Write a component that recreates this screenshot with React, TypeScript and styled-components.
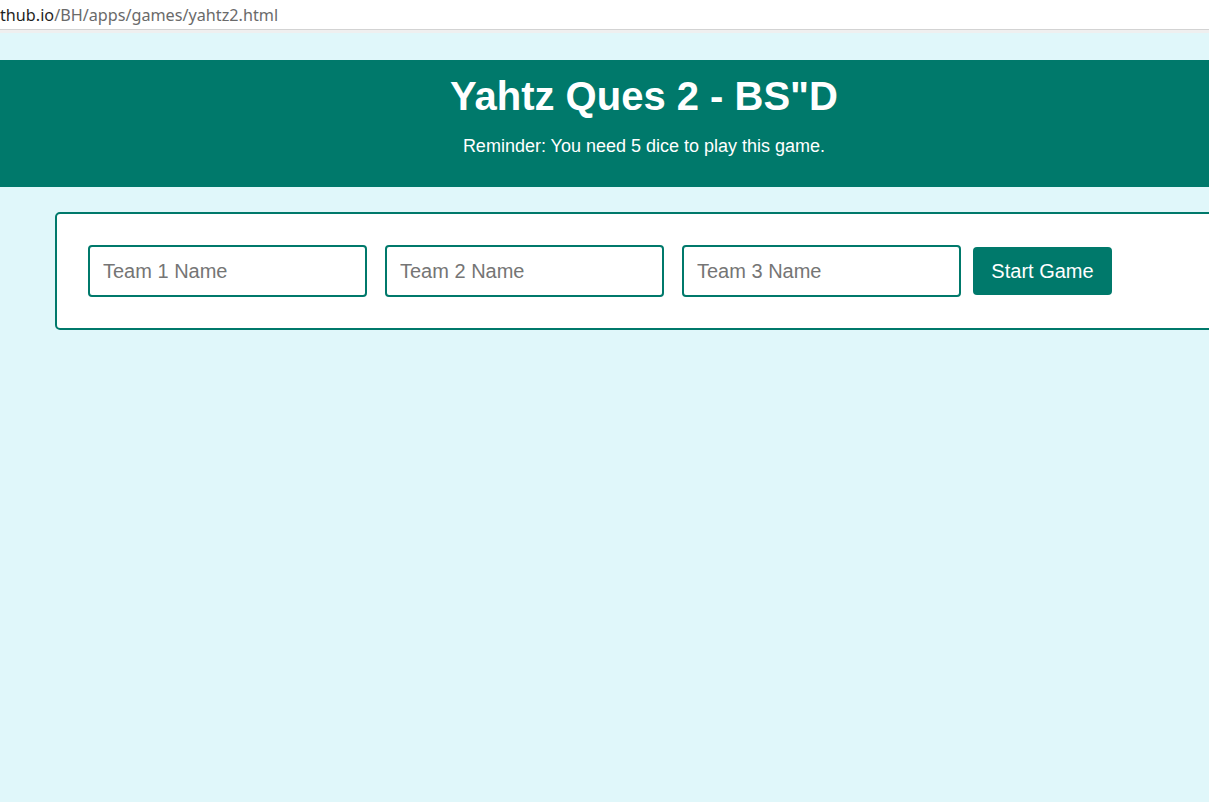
import React from 'react';
import styled, { createGlobalStyle } from 'styled-components';

const GlobalStyle = createGlobalStyle`
  body {
    margin: 0;
    background: #e0f7fa;
    font-family: "Liberation Sans", Arial, sans-serif;
    overflow: hidden;
  }
`;

const AddressBar = styled.div`
  height: 29px;
  background: #ffffff;
  border-bottom: 1px solid #d3d3d3;
  display: flex;
  align-items: center;
  font-family: "Noto Sans", "Open Sans", sans-serif;
  font-size: 16.2px;
  color: #6a6a6a;
  white-space: nowrap;
  overflow: hidden;
`;

const Host = styled.span`
  color: #1f1f1f;
`;

const Strip = styled.div`
  height: 3px;
  background: #efefef;
`;

const Page = styled.div`
  width: 1288px;
  padding-top: 27px;
`;

const Header = styled.header`
  background: #00796b;
  color: #ffffff;
  height: 127px;
  box-sizing: border-box;
  padding-top: 13px;
  text-align: center;
`;

const Title = styled.h1`
  margin: 0;
  font-size: 40px;
  line-height: 46px;
  font-weight: bold;
`;

const Reminder = styled.p`
  margin: 17px 0 0;
  font-size: 18px;
  line-height: 20px;
`;

const Card = styled.div`
  margin: 25px 55px 0;
  background: #ffffff;
  border: 2px solid #00796b;
  border-radius: 5px;
  padding: 31px;
  display: flex;
  align-items: center;
`;

const Fields = styled.div`
  display: flex;
  gap: 18px;
`;

const TeamInput = styled.input`
  width: 279px;
  height: 52px;
  box-sizing: border-box;
  border: 2px solid #00796b;
  border-radius: 4px;
  padding: 0 13px;
  font-family: "Liberation Sans", Arial, sans-serif;
  font-size: 20px;
  color: #222;
  outline: none;

  &::placeholder {
    color: #757575;
  }
`;

const StartButton = styled.button`
  margin-left: 12px;
  width: 139px;
  height: 48px;
  border: none;
  border-radius: 4px;
  background: #00796b;
  color: #ffffff;
  font-family: "Liberation Sans", Arial, sans-serif;
  font-size: 20px;
  cursor: pointer;
`;

const teams = ['Team 1 Name', 'Team 2 Name', 'Team 3 Name'];

const App: React.FC = () => {
  return (
    <>
      <GlobalStyle />
      <AddressBar>
        <Host>thub.io</Host>/BH/apps/games/yahtz2.html
      </AddressBar>
      <Strip />
      <Page>
        <Header>
          <Title>Yahtz Ques 2 - BS"D</Title>
          <Reminder>Reminder: You need 5 dice to play this game.</Reminder>
        </Header>
        <Card>
          <Fields>
            {teams.map((t) => (
              <TeamInput key={t} type="text" placeholder={t} />
            ))}
          </Fields>
          <StartButton>Start Game</StartButton>
        </Card>
      </Page>
    </>
  );
};

export default App;
